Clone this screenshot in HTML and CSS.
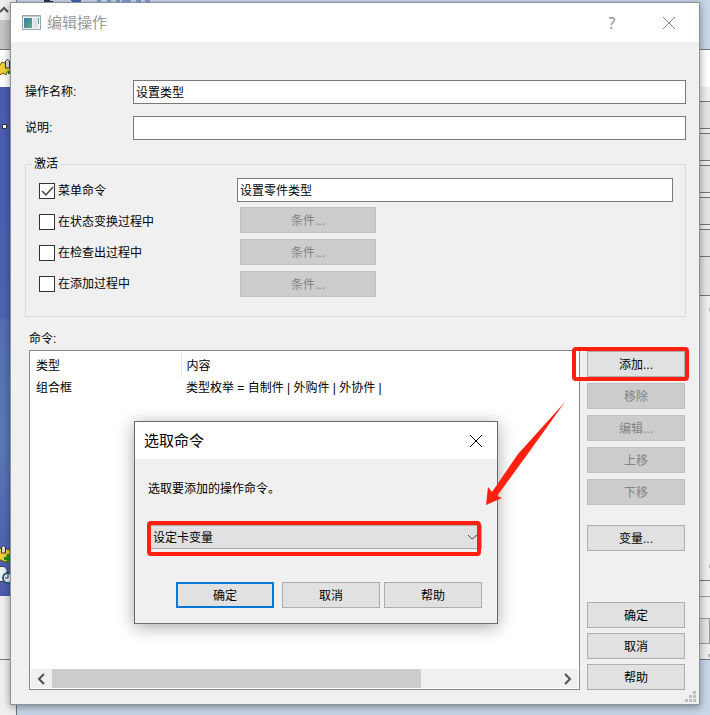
FILE: index.html
```html
<!DOCTYPE html>
<html lang="zh-CN">
<head>
<meta charset="utf-8">
<meta name="viewport" content="width=device-width, initial-scale=1">
<title>编辑操作</title>
<link rel="stylesheet" href="styles.css">
</head>
<body>
<div class="desktop">
  <svg class="backdrop backdrop-left" width="160" height="715" aria-hidden="true">
    <defs>
      <linearGradient id="sea" x1="0" y1="0" x2="0" y2="1">
        <stop offset="0" stop-color="#4a5cb0"/><stop offset=".45" stop-color="#4f63b4"/>
        <stop offset=".46" stop-color="#5470b2"/><stop offset=".7" stop-color="#5a79b6"/><stop offset="1" stop-color="#4c5bae"/>
      </linearGradient>
    </defs>
    <path fill="#efefef" d="M0 0h16v715H0z"/>
    <path fill="#c4c4c4" d="M0 20h11v29H0z"/>
    <path fill="#fff" d="M0 50h11v37H0z"/>
    <path stroke="#777" d="M0 49.500h11"/>
    <path fill="url(#sea)" d="M0 87h11v509H0z"/>
    <path stroke="#777" d="M0 659.500h11M16.500 0v2M16.500 704v11"/>
    <path fill="none" stroke="#555" stroke-width="2" d="M0 12l4-4 4 4"/>
    <path fill="#f2ce36" stroke="#6b5310" d="M-4 65l4 0 2-3 3 1 5-1v9l-3 1-1 3-3-2-3 2-3-4z"/>
    <path fill="#ddd" stroke="#333" d="M5.500 61l2-1.500 2 1.500v7h-4z"/>
    <path fill="#16801b" d="M8 71h3v3H8z"/>
    <path fill="#fff" stroke="#333" d="M2.500 124.500h4v4h-4z"/>
    <path fill="#f2ce36" stroke="#6b5310" d="M-3 549l5-1 8 2v10l-4 2-3-1-5-2z"/>
    <path fill="#ddd" stroke="#333" d="M1.500 547l2-1.500 2 1.500v6h-4z"/>
    <path stroke="#278a12" stroke-width="3" d="M8 554v9M4 558.500h8"/>
    <path fill="#edf2f4" stroke="#444" d="M-2 566.500h6l3 3v12h-9z"/>
    <circle cx="8" cy="578" r="5" fill="#eef5fb" stroke="#245c7c" stroke-width="2"/>
    <path fill="none" stroke="#333" d="M8 574v4H5"/>
    <path fill="#333" d="M44 0h6v1h3v1h-9z"/>
    <path fill="none" stroke="#3d63b8" d="M71 .5h10m-9 1h9M97 1h4m6 0h4M116 1h4m2 0h9M136 1h5m4 0h5"/>
  </svg>
  <svg class="backdrop backdrop-right" width="12" height="715" aria-hidden="true">
    <path fill="#fff" d="M0 50h12v37H0z"/>
    <path fill="#eee" d="M0 87h12v572H0z"/>
    <path fill="#e3e3e3" d="M0 102h12v26H0zM0 134h12v26H0zM0 166h12v26H0zM0 198h12v26H0zM0 230h12v26H0zM0 257h12v38H0zM0 618h12v26H0z"/>
    <path stroke="#777" d="M0 49.500h12M0 101.500h12M0 128.500h12M0 133.500h12M0 160.500h12M0 165.500h12M0 192.500h12M0 197.500h12M0 224.500h12M0 229.500h12M0 256.500h12M0 295.500h12M0 580.500h12M0 659.500h12"/>
    <path stroke="#999" d="M0 596.500h12M0 618.500h11M0 643.500h11M11.500 618v26"/>
    <path fill="#bbb" d="M11 308h1v3h-1zM11 565h1v3h-1zM10 654h2v3h-2z"/>
  </svg>

  <main class="window">
    <header class="titlebar">
      <svg width="20" height="16" viewBox="0 0 20 16" aria-hidden="true">
        <defs><linearGradient id="app" x2="1" y2="1"><stop stop-color="#3e7ba6"/><stop offset="1" stop-color="#59ad83"/></linearGradient></defs>
        <path fill="#f2f5f8" stroke="#98a2ac" d="M.5.5h18v14H.5z"/>
        <path fill="#c3c9d1" d="M1 1h17v1H1z"/>
        <path fill="url(#app)" d="M2 3h8v10H2z"/>
        <path fill="#dfe3e8" d="M11 3h5v10h-5z"/>
        <path fill="#5aab7a" d="M16 3h1v6h-1z"/>
      </svg>
      <h1>编辑操作</h1>
      <button class="tool help" type="button" aria-label="帮助主题">?</button>
      <button class="tool" type="button" aria-label="关闭">
        <svg width="14" height="14" aria-hidden="true"><path fill="none" stroke="currentColor" d="M1 1l12 12M13 1L1 13"/></svg>
      </button>
    </header>

    <form class="content">
      <div class="field"><label for="name">操作名称:</label><input class="text" id="name" type="text" value="设置类型"></div>
      <div class="field"><label for="note">说明:</label><input class="text" id="note" type="text"></div>

      <fieldset class="group">
        <legend>激活</legend>
        <div class="group-body">
          <div class="checks">
            <label class="check"><input type="checkbox" checked>菜单命令</label>
            <label class="check"><input type="checkbox">在状态变换过程中</label>
            <label class="check"><input type="checkbox">在检查出过程中</label>
            <label class="check"><input type="checkbox">在添加过程中</label>
          </div>
          <div class="options">
            <input class="text" type="text" value="设置零件类型" aria-label="菜单命令">
            <button class="btn" type="button" disabled>条件...</button>
            <button class="btn" type="button" disabled>条件...</button>
            <button class="btn" type="button" disabled>条件...</button>
          </div>
        </div>
      </fieldset>

      <h2>命令:</h2>
      <div class="commands">
        <div class="list">
          <table>
            <thead><tr><th>类型</th><th>内容</th></tr></thead>
            <tbody><tr><td>组合框</td><td>类型枚举 = 自制件 | 外购件 | 外协件 |</td></tr></tbody>
          </table>
          <div class="scrollbar">
            <button type="button" aria-label="向左滚动"><svg width="10" height="12" aria-hidden="true"><path fill="none" stroke="#505050" stroke-width="2" d="M7 1L2 6l5 5"/></svg></button>
            <div class="track"><div class="thumb"></div></div>
            <button type="button" aria-label="向右滚动"><svg width="10" height="12" aria-hidden="true"><path fill="none" stroke="#505050" stroke-width="2" d="M2 1l5 5-5 5"/></svg></button>
          </div>
        </div>
        <div class="actions">
          <div class="stack">
            <div class="marked"><button class="btn" type="button">添加...</button></div>
            <button class="btn" type="button" disabled>移除</button>
            <button class="btn" type="button" disabled>编辑...</button>
            <button class="btn" type="button" disabled>上移</button>
            <button class="btn" type="button" disabled>下移</button>
          </div>
          <button class="btn variables" type="button">变量...</button>
          <div class="stack closing">
            <button class="btn" type="button">确定</button>
            <button class="btn" type="button">取消</button>
            <button class="btn" type="button">帮助</button>
          </div>
        </div>
      </div>
    </form>
    <svg class="grip" width="11" height="11" aria-hidden="true"><path fill="#bfbfbf" d="M8 0h3v3H8zM4 4h3v3H4zM8 4h3v3H8zM0 8h3v3H0zM4 8h3v3H4zM8 8h3v3H8z"/></svg>
  </main>

  <section class="dialog" role="dialog" aria-labelledby="pick">
    <header class="dialog-title">
      <h2 id="pick">选取命令</h2>
      <button class="tool" type="button" aria-label="关闭">
        <svg width="14" height="14" aria-hidden="true"><path fill="none" stroke="currentColor" d="M1 1l12 12M13 1L1 13"/></svg>
      </button>
    </header>
    <div class="dialog-body">
      <label for="command">选取要添加的操作命令。</label>
      <div class="picker">
        <select id="command"><option>设定卡变量</option></select>
        <svg class="chevron" width="11" height="7" aria-hidden="true"><path fill="none" stroke="#444" d="M1 1l4 4 5-4"/></svg>
      </div>
      <div class="dialog-actions">
        <button class="btn primary" type="button">确定</button>
        <button class="btn" type="button">取消</button>
        <button class="btn" type="button">帮助</button>
      </div>
    </div>
  </section>

  <svg class="arrow" width="82" height="106" aria-hidden="true"><path fill="#ff2010" d="M1 104L3 86l4 5L33 53 80 1 39 58 12 95l5 2z"/></svg>
</div>
</body>
</html>
```
FILE: styles.css
```css
* { box-sizing: border-box; }

body {
  margin: 0;
  font: 12px/18px "Liberation Sans", "Noto Sans CJK SC", sans-serif;
  color: #000;
}

button, input, select { font: inherit; color: inherit; margin: 0; border-radius: 0; }
h1, h2 { margin: 0; font-weight: 400; }

.desktop {
  position: relative;
  display: flex;
  min-height: 100vh;
  padding: 2px 10px 10px;
  background: #c8d6e9;
  overflow: hidden;
}

.backdrop { position: absolute; top: 0; }
.backdrop-left { left: 0; }
.backdrop-right { right: 0; }

.window {
  position: relative;
  display: flex;
  flex-direction: column;
  flex: 1;
  border: 1px solid #8b929c;
  background: #f0f0f0;
  box-shadow: 0 2px 8px rgba(0, 0, 0, .4);
}

.titlebar {
  display: flex;
  align-items: center;
  height: 39px;
  padding: 0 22px 0 11px;
  background: #fff;
  color: #999;
}
.titlebar h1 { flex: 1; margin-left: 5px; font-size: 15px; line-height: 20px; }

.tool {
  display: grid;
  place-items: center;
  width: 16px;
  height: 24px;
  padding: 0;
  border: 0;
  background: none;
}
.titlebar .tool { color: #888; }
.help { margin-right: 41px; font: 16px/24px "Open Sans", sans-serif; }

.content {
  display: flex;
  flex-direction: column;
  flex: 1;
  padding: 38px 13px 14px 14px;
}

.field {
  display: grid;
  grid-template-columns: 108px 1fr;
  align-items: center;
  margin-bottom: 12px;
}

.text {
  width: 100%;
  height: 24px;
  padding: 0 2px 2px;
  border: 1px solid #7a7a7a;
  background: #fff;
}

.group {
  min-width: 0;
  margin: 3px 0 0;
  padding: 0 12px 19px 13px;
  border: 1px solid #dcdcdc;
}
.group legend { padding: 0 3px 0 2px; margin-left: -7px; }
.group-body { display: grid; grid-template-columns: 198px 1fr; margin-top: 5px; }

.checks { display: flex; flex-direction: column; gap: 13px; padding-top: 4px; }
.check { display: flex; align-items: center; gap: 3px; }
.check input {
  appearance: none;
  width: 16px;
  height: 16px;
  border: 1px solid #333;
  background: #fff;
}
.check input:checked {
  background: #fff url("data:image/svg+xml,%3Csvg xmlns='http://www.w3.org/2000/svg' width='14' height='14'%3E%3Cpath d='M2 7l4 4 7-8' fill='none' stroke='%23444' stroke-width='1.500'/%3E%3C/svg%3E");
}

.options { display: flex; flex-direction: column; gap: 6px; }
.options .text { margin-bottom: -1px; }
.options .btn { width: 136px; margin-left: 3px; }

.btn {
  width: 98px;
  height: 26px;
  padding: 1px 0 0;
  border: 1px solid #adadad;
  background: #e1e1e1;
  text-align: center;
}
.btn:disabled { border-color: #bfbfbf; background: #ccc; color: #838383; }
.btn.primary { border: 2px solid #0078d7; }

.content h2 { margin: 13px 4px 2px; font-size: 12px; line-height: 18px; }

.commands {
  display: grid;
  grid-template-columns: 1fr 98px;
  flex: 1;
  gap: 7px;
  padding: 0 1px 0 4px;
}

.list {
  display: flex;
  flex-direction: column;
  justify-content: space-between;
  padding: 1px;
  border: 1px solid #828790;
  background: #fff;
}
.list table { width: 100%; border-collapse: collapse; table-layout: fixed; }
.list th, .list td { padding: 2px 5px 0; font-weight: 400; text-align: left; white-space: nowrap; }
.list th { height: 25px; }
.list td { height: 20px; }
.list th:first-child { width: 150px; border-right: 1px solid #e5e5e5; }

.scrollbar {
  display: grid;
  grid-template-columns: 21px 1fr 21px;
  height: 19px;
  background: #f0f0f0;
}
.scrollbar button { display: grid; place-items: center; padding: 0; border: 0; background: none; }
.thumb { width: 73%; height: 100%; background: #cdcdcd; }

.actions { display: flex; flex-direction: column; padding-top: 1px; }
.stack { display: flex; flex-direction: column; gap: 6px; }
.closing { gap: 5px; margin-top: auto; }
.variables { margin-top: 20px; }

.marked, .picker { position: relative; }
.marked .btn { display: block; }
.marked::after, .picker::after {
  content: "";
  position: absolute;
  border: 4px solid #ff2010;
  border-radius: 4px;
  pointer-events: none;
}
.marked::after { inset: -4px -4px -4px -15px; }
.picker::after { inset: -4px 1px -7px -1px; }

.grip { position: absolute; right: 3px; bottom: 2px; }

.dialog {
  position: absolute;
  top: 421px;
  left: 134px;
  width: 364px;
  border: 1px solid #6b6b6b;
  background: #f0f0f0;
  box-shadow: 0 3px 16px rgba(0, 0, 0, .35);
}
.dialog-title {
  display: flex;
  align-items: center;
  justify-content: space-between;
  height: 37px;
  padding: 0 13px 0 9px;
  background: #fff;
}
.dialog-title h2 { font-size: 15px; line-height: 20px; }
.dialog-body { padding: 21px 15px 15px 13px; }
.dialog-body label { display: block; }

.picker { margin: 27px 0 33px; }
.picker select {
  display: block;
  appearance: none;
  width: 100%;
  height: 24px;
  padding: 2px 4px 0;
  border: 1px solid #adadad;
  background: #e1e1e1;
}
.chevron { position: absolute; top: 9px; right: 4px; }

.dialog-actions { display: flex; justify-content: flex-end; gap: 4px; }
.primary { margin-right: 4px; }

.arrow { position: absolute; top: 401px; left: 485px; }
```
